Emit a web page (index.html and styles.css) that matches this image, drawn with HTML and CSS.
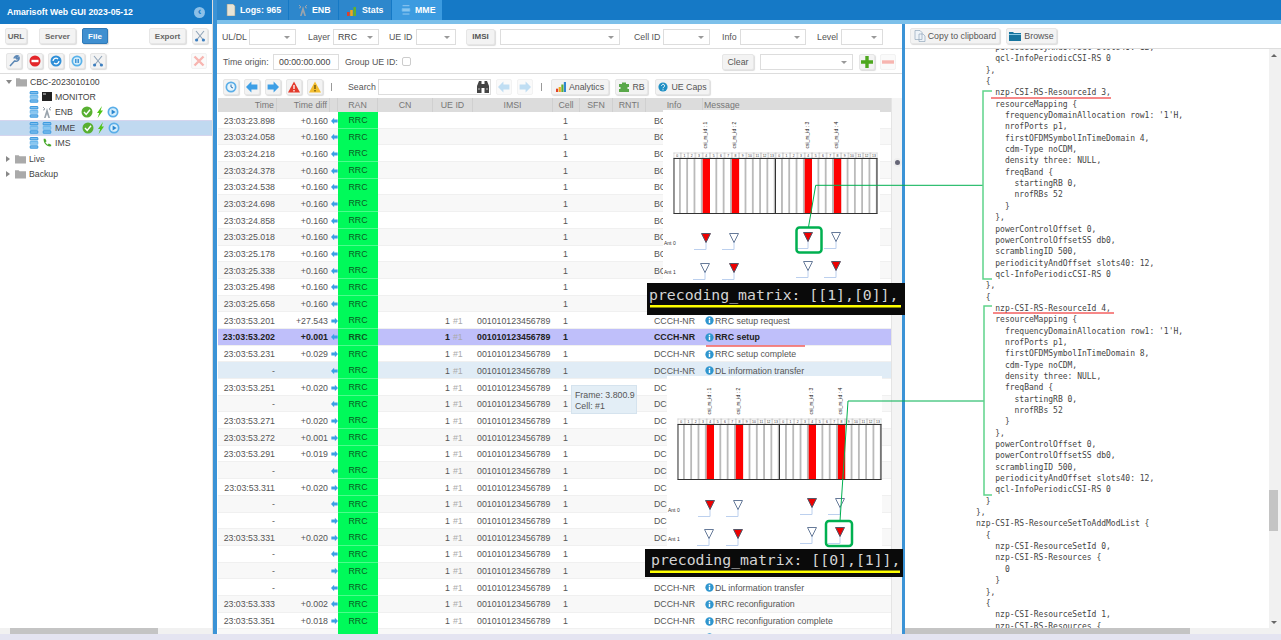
FILE: index.html
```html
<!doctype html>
<html>
    <head>
        <meta charset="utf-8">
        <title>Amarisoft Web GUI</title>
        <link rel="stylesheet" href="styles.css">
    </head>
    <body>
        <!-- Shared icons -->
        <svg class="defs">
            <defs>
            <symbol id="db" viewBox="0 0 10 14"><rect y="0" width="10" height="4.2" rx="1.5" fill="#3d9be0"/><rect y="4.8" width="10" height="4.2" rx="1" fill="#6db8ec"/><rect y="9.6" width="10" height="4.2" rx="1.5" fill="#3d9be0"/><path d="M1 2h8M1 7h8M1 11.7h8" stroke="#cfe9fb" stroke-width=".7"/></symbol>
            <symbol id="folder" viewBox="0 0 12 10"><path d="M0 1h4l1 1h7v8H0z" fill="#aaa"/></symbol>
            <symbol id="check" viewBox="0 0 12 12"><circle cx="6" cy="6" r="5.5" fill="#58b031"/><path d="M3 6l2.2 2.4L9 3.8" fill="none" stroke="#fff" stroke-width="1.5"/></symbol>
            <symbol id="bolt" viewBox="0 0 8 12"><path d="M6 0L1 7h2.2L1.6 12 7 4.6H4.6z" fill="#4fc415"/></symbol>
            <symbol id="play" viewBox="0 0 12 12"><circle cx="6" cy="6" r="5.5" fill="#5aaee8"/><circle cx="6" cy="6" r="3.8" fill="#d8effc"/><path d="M4.6 3.4L8.6 6l-4 2.6z" fill="#2a86cf"/></symbol>
            <symbol id="tower" viewBox="0 0 10 12"><path d="M5 2L2 12h1.6L5 8l1.4 4H8z" fill="#9aa4ad"/><path d="M1 1l2 2M9 1L7 3M1 4l2-.5M9 4l-2-.5" stroke="#9aa4ad"/></symbol>
            <symbol id="al" viewBox="0 0 8 8"><path d="M0 4l3.6-3.6v2h4v3.2h-4v2z" fill="#3d9fe6"/></symbol>
            <symbol id="ar" viewBox="0 0 8 8"><path d="M8 4L4.4.4v2h-4v3.2h4v2z" fill="#3d9fe6"/></symbol>
            <symbol id="info" viewBox="0 0 10 10"><circle cx="5" cy="5" r="4.6" fill="#2f96cf"/><rect x="4.2" y="4.2" width="1.6" height="3.6" fill="#fff"/><rect x="4.2" y="2" width="1.6" height="1.5" fill="#fff"/></symbol>
            <symbol id="scissors" viewBox="0 0 12 12"><path d="M3 9.500L10 1M9 9.500L2 1" stroke="#8fa3b8" stroke-width="1.1"/><circle cx="2.600" cy="10" r="1.600" fill="#3d7fc0"/><circle cx="9.400" cy="10" r="1.600" fill="#3d7fc0"/></symbol>
            <symbol id="bars" viewBox="0 0 12 12"><rect x="0" y="8" width="2.6" height="4" fill="#e0402a"/><rect x="3.2" y="6" width="2.6" height="6" fill="#f2a81d"/><rect x="6.4" y="3" width="2.6" height="9" fill="#62b02f"/><rect x="9.4" y="0" width="2.6" height="12" fill="#2f86d0"/></symbol>
            <symbol id="warn-red" viewBox="0 0 12 12"><path d="M6 .5L12 11.5H0z" fill="#e33a2c"/><path d="M6 4v4M6 9v1.4" stroke="#fff" stroke-width="1.3"/></symbol>
            <symbol id="warn-yel" viewBox="0 0 12 12"><path d="M6 .5L12 11.5H0z" fill="#f3bd2e"/><path d="M6 4v4M6 9v1.4" stroke="#5a4300" stroke-width="1.2"/></symbol>
            <symbol id="ant-on" viewBox="0 0 18 19"><path d="M0 16.5h12V8" fill="none" stroke="#bcd0ee"/><path d="M7.500 .5h9L12 9.500z" fill="#e00" stroke="#556"/></symbol>
            <symbol id="ant-off" viewBox="0 0 18 19"><path d="M0 16.5h12V8" fill="none" stroke="#bcd0ee"/><path d="M7.500 .5h9L12 9.500z" fill="#fff" stroke="#667a99"/></symbol>
            <g id="slot" class="ov-num">
                <rect width="102" height="6" fill="#fff"/>
                <text x="3.6" y="4.600">0</text><text x="10.9" y="4.600">1</text><text x="18.200" y="4.600">2</text><text x="25.500" y="4.600">3</text><text x="32.800" y="4.600">4</text><text x="40.100" y="4.600">5</text><text x="47.400" y="4.600">6</text><text x="54.700" y="4.600">7</text><text x="62" y="4.600">8</text><text x="69.300" y="4.600">9</text><text x="76.500" y="4.600">10</text><text x="83.800" y="4.600">11</text><text x="91.100" y="4.600">12</text><text x="98.400" y="4.600">13</text>
            </g>
            <pattern id="cells" width="7.29" height="60" patternUnits="userSpaceOnUse"><rect width="7.29" height="60" fill="#fff"/><rect x="5.500" width="1.800" height="60" fill="#b9b9b9"/></pattern>
            <pattern id="heads" width="7.29" height="6" patternUnits="userSpaceOnUse"><rect width="7.29" height="6" fill="none" stroke="#777" stroke-width=".5"/></pattern>
            <g id="resgrid">
                <use href="#slot"/><use href="#slot" x="102"/>
                <rect y="0" width="204" height="6" fill="url(#heads)"/>
                <rect y="6" width="204" height="55" fill="url(#cells)"/>
                <rect x="29.200" y="6" width="7.300" height="55" fill="#f00"/><rect x="58.300" y="6" width="7.300" height="55" fill="#f00"/><rect x="131.200" y="6" width="7.300" height="55" fill="#f00"/><rect x="160.400" y="6" width="7.300" height="55" fill="#f00"/>
                <path d="M0 6H204M0 61H204M.5 6V61M102 6V61M203.500 6V61" fill="none" stroke="#333"/>
                <g class="ov-id">
                    <text transform="translate(33.500 -4) rotate(-90)">csi_rs_id : 1</text>
                    <text transform="translate(62 -4) rotate(-90)">csi_rs_id : 2</text>
                    <text transform="translate(135 -4) rotate(-90)">csi_rs_id : 3</text>
                    <text transform="translate(164 -4) rotate(-90)">csi_rs_id : 4</text>
                </g>
            </g>
            </defs>
        </svg>

        <div class="app">
            <div class="side">
                <div class="side-title"><span>Amarisoft Web GUI 2023-05-12</span><i class="collapse">‹</i></div>
                <div class="side-bar">
                    <span class="btn btn-bold b-url">URL</span>
                    <span class="btn btn-bold b-server">Server</span>
                    <span class="btn btn-bold b-file">File</span>
                    <span class="btn btn-bold b-export">Export</span>
                    <span class="btn sq b-cut"><svg class="ic12"><use href="#scissors"/></svg></span>
                </div>
                <div class="side-bar side-tools">
                    <span class="btn sq"><svg class="ic12" viewBox="0 0 12 12"><path d="M2 11L7 5.500M6 3.500a3 3 0 0 1 4-2.500L8 3l1 1 2-1.500a3 3 0 0 1-4 3.500" fill="none" stroke="#5b87b5" stroke-width="1.500"/></svg></span>
                    <span class="btn sq"><svg class="ic12" viewBox="0 0 12 12"><circle cx="6" cy="6" r="5.500" fill="#e3262a"/><rect x="2.500" y="4.800" width="7" height="2.400" fill="#fff"/></svg></span>
                    <span class="btn sq"><svg class="ic12" viewBox="0 0 12 12"><circle cx="6" cy="6" r="5.500" fill="#2f8fd8"/><path d="M3 6a3 3 0 0 1 5-2M9 6a3 3 0 0 1-5 2" fill="none" stroke="#fff" stroke-width="1.300"/></svg></span>
                    <span class="btn sq"><svg class="ic12" viewBox="0 0 12 12"><circle cx="6" cy="6" r="5.500" fill="#59b2ea"/><circle cx="6" cy="6" r="3.800" fill="#d6eefb"/><path d="M4.800 4v4M7.200 4v4" stroke="#2a86cf" stroke-width="1.300"/></svg></span>
                    <span class="btn sq"><svg class="ic12"><use href="#scissors"/></svg></span>
                    <span class="btn sq flat b-close"><svg class="ic12" viewBox="0 0 12 12"><path d="M1.500 1.500l9 9M10.500 1.500l-9 9" stroke="#f7b5b0" stroke-width="2.400"/></svg></span>
                </div>
                <div class="tree">
                    <div class="node"><i class="tw tw-open"></i><svg class="ic-folder"><use href="#folder"/></svg>CBC-2023010100</div>
                    <div class="node lv"><svg class="ic-db"><use href="#db"/></svg><svg class="ic-db" viewBox="0 0 10 10"><rect width="10" height="9" fill="#222"/><path d="M1 2h3" stroke="#ddd"/></svg><span>MONITOR</span></div>
                    <div class="node lv"><svg class="ic-db"><use href="#db"/></svg><svg class="ic-db"><use href="#tower"/></svg><span class="nm-w">ENB</span><svg class="ic-st"><use href="#check"/></svg><svg class="ic-bolt"><use href="#bolt"/></svg><svg class="ic-st"><use href="#play"/></svg></div>
                    <div class="node lv sel-node"><svg class="ic-db"><use href="#db"/></svg><svg class="ic-db"><use href="#db"/></svg><span class="nm-w2">MME</span><svg class="ic-st"><use href="#check"/></svg><svg class="ic-bolt"><use href="#bolt"/></svg><svg class="ic-st"><use href="#play"/></svg></div>
                    <div class="node lv"><svg class="ic-db"><use href="#db"/></svg><svg class="ic-db" viewBox="0 0 12 12"><path d="M2 1l2 0 1.500 3-1.500 1c.8 1.500 1.800 2.500 3 3l1-1.500 3 1.500v2c-5 1-9.500-3.500-9-9z" fill="#49a92c"/></svg><span>IMS</span></div>
                    <div class="node"><i class="tw"></i><svg class="ic-folder"><use href="#folder"/></svg>Live</div>
                    <div class="node"><i class="tw"></i><svg class="ic-folder"><use href="#folder"/></svg>Backup</div>
                </div>
                <div class="hscroll"><i class="hthumb"></i></div>
            </div>
            <div class="vsplit"></div>
            <div class="main">
                <div class="tabs">
                    <span class="tab t-logs"><svg class="ic12" viewBox="0 0 10 12"><path d="M1 0h6l2 2v10H1z" fill="#e8e4d6" stroke="#998"  stroke-width=".6"/></svg>Logs: 965</span>
                    <span class="tab t-enb"><svg class="ic12"><use href="#tower"/></svg>ENB</span>
                    <span class="tab t-stats"><svg class="ic12"><use href="#bars"/></svg>Stats</span>
                    <span class="tab tab-on t-mme"><svg class="ic12"><use href="#db"/></svg>MME</span>
                </div>
                <div class="strip"></div>
                <div class="panes">
                    <div class="logpane">
                        <div class="filter">
                            <label class="f1">UL/DL<span class="sel w47"></span></label>
                            <label class="f2">Layer<span class="sel w46">RRC</span></label>
                            <label class="f3">UE ID<span class="sel w40"></span></label>
                            <span class="btn b-imsi">IMSI</span>
                            <span class="sel w120"></span>
                            <label class="f4">Cell ID<span class="sel w47"></span></label>
                            <label class="f5">Info<span class="sel w66"></span></label>
                            <label class="f6">Level<span class="sel w42"></span></label>
                        </div>
                        <div class="filter">
                            <label class="f7">Time origin:<span class="inp">00:00:00.000</span></label>
                            <label class="f8">Group UE ID:<i class="chk"></i></label>
                            <span class="btn b-clear">Clear</span>
                            <span class="sel w93"></span>
                            <span class="btn sq b-plus"><svg class="ic12" viewBox="0 0 12 12"><path d="M4.300 0h3.400v4.300H12v3.400H7.700V12H4.300V7.700H0V4.300h4.300z" fill="#4ea81f"/></svg></span>
                            <span class="btn sq flat b-minus"><svg class="ic12" viewBox="0 0 12 12"><rect y="4.300" width="12" height="3.400" fill="#f7b5b0"/></svg></span>
                        </div>
                        <div class="filter tools">
                            <span class="btn sq"><svg class="ic12" viewBox="0 0 12 12"><circle cx="6" cy="6" r="5.500" fill="#5aaee8"/><circle cx="6" cy="6" r="3.800" fill="#e8f5fc"/><path d="M6 3.500V6l2 1" fill="none" stroke="#2a6fb0"/></svg></span>
                            <span class="btn sq"><svg class="ic12"><use href="#al"/></svg></span>
                            <span class="btn sq"><svg class="ic12"><use href="#ar"/></svg></span>
                            <span class="btn sq"><svg class="ic12"><use href="#warn-red"/></svg></span>
                            <span class="btn sq"><svg class="ic12"><use href="#warn-yel"/></svg></span>
                            <i class="pipe p1"></i>
                            <label class="f9">Search<span class="inp search"><svg class="ic-bino" viewBox="0 0 14 14"><path d="M1 13V6l2-5h2.500v3h3V1H11l2 5v7H8.500V8h-3v5z" fill="#444"/><path d="M2 9h2M10 9h2" stroke="#bbb"/></svg></span></label>
                            <span class="btn sq flat"><svg class="ic12 faded"><use href="#al"/></svg></span>
                            <span class="btn sq flat"><svg class="ic12 faded"><use href="#ar"/></svg></span>
                            <i class="pipe p2"></i>
                            <span class="btn b-ana"><svg class="ic10"><use href="#bars"/></svg>Analytics</span>
                            <span class="btn b-rb"><svg class="ic12" viewBox="0 0 12 12"><path d="M1 3h3V1.500h4V3h3v3H9.500v2H11v3H1V8h1.500V6H1z" fill="#5aa84a"/></svg>RB</span>
                            <span class="btn b-caps"><svg class="ic10" viewBox="0 0 12 12"><circle cx="6" cy="6" r="5.500" fill="#1f8fc4"/><path d="M4.300 4.500a1.800 1.800 0 1 1 2.700 1.600c-.7.400-1 .8-1 1.400M6 8.700v1.300" fill="none" stroke="#fff" stroke-width="1.200"/></svg>UE Caps</span>
                        </div>
                        <div class="gridwrap">
                            <div class="grid">
                                <div class="hdr">
                                    <span class="h-r">Time</span><span class="h-r">Time diff</span><span></span><span>RAN</span><span>CN</span><span>UE ID</span><span>IMSI</span><span>Cell</span><span>SFN</span><span>RNTI</span><span>Info</span><span class="h-l">Message</span>
                                </div>
                                <div class="row"><span class="t">23:03:23.898</span><span class="d">+0.160</span><svg class="ar"><use href="#al"/></svg><span class="ran">RRC</span><span class="c">1</span><span class="i">BCCH-NR</span></div>
                                <div class="row"><span class="t">23:03:24.058</span><span class="d">+0.160</span><svg class="ar"><use href="#al"/></svg><span class="ran">RRC</span><span class="c">1</span><span class="i">BCCH-NR</span></div>
                                <div class="row"><span class="t">23:03:24.218</span><span class="d">+0.160</span><svg class="ar"><use href="#al"/></svg><span class="ran">RRC</span><span class="c">1</span><span class="i">BCCH-NR</span></div>
                                <div class="row"><span class="t">23:03:24.378</span><span class="d">+0.160</span><svg class="ar"><use href="#al"/></svg><span class="ran">RRC</span><span class="c">1</span><span class="i">BCCH-NR</span></div>
                                <div class="row"><span class="t">23:03:24.538</span><span class="d">+0.160</span><svg class="ar"><use href="#al"/></svg><span class="ran">RRC</span><span class="c">1</span><span class="i">BCCH-NR</span></div>
                                <div class="row"><span class="t">23:03:24.698</span><span class="d">+0.160</span><svg class="ar"><use href="#al"/></svg><span class="ran">RRC</span><span class="c">1</span><span class="i">BCCH-NR</span></div>
                                <div class="row"><span class="t">23:03:24.858</span><span class="d">+0.160</span><svg class="ar"><use href="#al"/></svg><span class="ran">RRC</span><span class="c">1</span><span class="i">BCCH-NR</span></div>
                                <div class="row"><span class="t">23:03:25.018</span><span class="d">+0.160</span><svg class="ar"><use href="#al"/></svg><span class="ran">RRC</span><span class="c">1</span><span class="i">BCCH-NR</span></div>
                                <div class="row"><span class="t">23:03:25.178</span><span class="d">+0.160</span><svg class="ar"><use href="#al"/></svg><span class="ran">RRC</span><span class="c">1</span><span class="i">BCCH-NR</span></div>
                                <div class="row"><span class="t">23:03:25.338</span><span class="d">+0.160</span><svg class="ar"><use href="#al"/></svg><span class="ran">RRC</span><span class="c">1</span><span class="i">BCCH-NR</span></div>
                                <div class="row"><span class="t">23:03:25.498</span><span class="d">+0.160</span><svg class="ar"><use href="#al"/></svg><span class="ran">RRC</span><span class="c">1</span><span class="i">BCCH-NR</span></div>
                                <div class="row"><span class="t">23:03:25.658</span><span class="d">+0.160</span><svg class="ar"><use href="#al"/></svg><span class="ran">RRC</span><span class="c">1</span><span class="i">BCCH-NR</span></div>
                                <div class="row"><span class="t">23:03:53.201</span><span class="d">+27.543</span><svg class="ar"><use href="#ar"/></svg><span class="ran">RRC</span><span class="ue">1<b>#1</b></span><span class="imsi">001010123456789</span><span class="c">1</span><span class="i">CCCH-NR</span><span class="m"><svg class="ii"><use href="#info"/></svg>RRC setup request</span></div>
                                <div class="row row-sel"><span class="t">23:03:53.202</span><span class="d">+0.001</span><svg class="ar"><use href="#al"/></svg><span class="ran">RRC</span><span class="ue">1<b>#1</b></span><span class="imsi">001010123456789</span><span class="c">1</span><span class="i">CCCH-NR</span><span class="m"><svg class="ii"><use href="#info"/></svg>RRC setup</span></div>
                                <div class="row"><span class="t">23:03:53.231</span><span class="d">+0.029</span><svg class="ar"><use href="#ar"/></svg><span class="ran">RRC</span><span class="ue">1<b>#1</b></span><span class="imsi">001010123456789</span><span class="c">1</span><span class="i">DCCH-NR</span><span class="m"><svg class="ii"><use href="#info"/></svg>RRC setup complete</span></div>
                                <div class="row row-hi"><span class="t">-</span><span class="d"></span><svg class="ar"><use href="#al"/></svg><span class="ran">RRC</span><span class="ue">1<b>#1</b></span><span class="imsi">001010123456789</span><span class="c">1</span><span class="i">DCCH-NR</span><span class="m"><svg class="ii"><use href="#info"/></svg>DL information transfer</span></div>
                                <div class="row"><span class="t">23:03:53.251</span><span class="d">+0.020</span><svg class="ar"><use href="#ar"/></svg><span class="ran">RRC</span><span class="ue">1<b>#1</b></span><span class="imsi">001010123456789</span><span class="c">1</span><span class="i">DCCH-NR</span></div>
                                <div class="row"><span class="t">-</span><span class="d"></span><svg class="ar"><use href="#al"/></svg><span class="ran">RRC</span><span class="ue">1<b>#1</b></span><span class="imsi">001010123456789</span><span class="c">1</span><span class="i">DCCH-NR</span></div>
                                <div class="row"><span class="t">23:03:53.271</span><span class="d">+0.020</span><svg class="ar"><use href="#ar"/></svg><span class="ran">RRC</span><span class="ue">1<b>#1</b></span><span class="imsi">001010123456789</span><span class="c">1</span><span class="i">DCCH-NR</span></div>
                                <div class="row"><span class="t">23:03:53.272</span><span class="d">+0.001</span><svg class="ar"><use href="#ar"/></svg><span class="ran">RRC</span><span class="ue">1<b>#1</b></span><span class="imsi">001010123456789</span><span class="c">1</span><span class="i">DCCH-NR</span></div>
                                <div class="row"><span class="t">23:03:53.291</span><span class="d">+0.019</span><svg class="ar"><use href="#ar"/></svg><span class="ran">RRC</span><span class="ue">1<b>#1</b></span><span class="imsi">001010123456789</span><span class="c">1</span><span class="i">DCCH-NR</span></div>
                                <div class="row"><span class="t">-</span><span class="d"></span><svg class="ar"><use href="#al"/></svg><span class="ran">RRC</span><span class="ue">1<b>#1</b></span><span class="imsi">001010123456789</span><span class="c">1</span><span class="i">DCCH-NR</span></div>
                                <div class="row"><span class="t">23:03:53.311</span><span class="d">+0.020</span><svg class="ar"><use href="#ar"/></svg><span class="ran">RRC</span><span class="ue">1<b>#1</b></span><span class="imsi">001010123456789</span><span class="c">1</span><span class="i">DCCH-NR</span></div>
                                <div class="row"><span class="t">-</span><span class="d"></span><svg class="ar"><use href="#al"/></svg><span class="ran">RRC</span><span class="ue">1<b>#1</b></span><span class="imsi">001010123456789</span><span class="c">1</span><span class="i">DCCH-NR</span></div>
                                <div class="row"><span class="t">-</span><span class="d"></span><svg class="ar"><use href="#ar"/></svg><span class="ran">RRC</span><span class="ue">1<b>#1</b></span><span class="imsi">001010123456789</span><span class="c">1</span><span class="i">DCCH-NR</span></div>
                                <div class="row"><span class="t">23:03:53.331</span><span class="d">+0.020</span><svg class="ar"><use href="#ar"/></svg><span class="ran">RRC</span><span class="ue">1<b>#1</b></span><span class="imsi">001010123456789</span><span class="c">1</span><span class="i">DCCH-NR</span></div>
                                <div class="row"><span class="t">-</span><span class="d"></span><svg class="ar"><use href="#al"/></svg><span class="ran">RRC</span><span class="ue">1<b>#1</b></span><span class="imsi">001010123456789</span><span class="c">1</span><span class="i">DCCH-NR</span></div>
                                <div class="row"><span class="t">-</span><span class="d"></span><svg class="ar"><use href="#ar"/></svg><span class="ran">RRC</span><span class="ue">1<b>#1</b></span><span class="imsi">001010123456789</span><span class="c">1</span><span class="i">DCCH-NR</span></div>
                                <div class="row"><span class="t">-</span><span class="d"></span><svg class="ar"><use href="#al"/></svg><span class="ran">RRC</span><span class="ue">1<b>#1</b></span><span class="imsi">001010123456789</span><span class="c">1</span><span class="i">DCCH-NR</span><span class="m"><svg class="ii"><use href="#info"/></svg>DL information transfer</span></div>
                                <div class="row"><span class="t">23:03:53.333</span><span class="d">+0.002</span><svg class="ar"><use href="#al"/></svg><span class="ran">RRC</span><span class="ue">1<b>#1</b></span><span class="imsi">001010123456789</span><span class="c">1</span><span class="i">DCCH-NR</span><span class="m"><svg class="ii"><use href="#info"/></svg>RRC reconfiguration</span></div>
                                <div class="row"><span class="t">23:03:53.351</span><span class="d">+0.018</span><svg class="ar"><use href="#ar"/></svg><span class="ran">RRC</span><span class="ue">1<b>#1</b></span><span class="imsi">001010123456789</span><span class="c">1</span><span class="i">DCCH-NR</span><span class="m"><svg class="ii"><use href="#info"/></svg>RRC reconfiguration complete</span></div>
                                <div class="row"><span class="t">23:04:03.384</span><span class="d">+0.033</span><svg class="ar"><use href="#ar"/></svg><span class="ran">RRC</span><span class="ue">1<b>#1</b></span><span class="imsi">001010123456789</span><span class="c">1</span><span class="i">DCCH-NR</span><span class="m"><svg class="ii"><use href="#info"/></svg>RRC release</span></div>
                            </div>
                            <div class="gridscroll"><i class="knob"></i></div>
                        </div>
                    </div>
                    <div class="vsplit vsplit-r"></div>
                    <div class="detail">
                        <div class="detail-bar">
                            <span class="btn b-copy"><svg class="ic12" viewBox="0 0 12 12"><path d="M1 .5h5l2 2v7H1zM5 4h4l2 2v5.500H5z" fill="#eef3f8" stroke="#93a7bb" stroke-width=".7"/></svg>Copy to clipboard</span>
                            <span class="btn b-browse"><svg class="ic12" viewBox="0 0 12 10"><path d="M0 1h4l1 1h7v8H0z" fill="#16759f"/><rect y="3" width="12" height="1" fill="#8ccbe6"/></svg>Browse</span>
                        </div>
                        <div class="detail-body">
<pre class="asn">    periodicityAndOffset slots40: 12,
    qcl-InfoPeriodicCSI-RS 0
  },
  {
    nzp-CSI-RS-ResourceId 3,
    resourceMapping {
      frequencyDomainAllocation row1: '1'H,
      nrofPorts p1,
      firstOFDMSymbolInTimeDomain 4,
      cdm-Type noCDM,
      density three: NULL,
      freqBand {
        startingRB 0,
        nrofRBs 52
      }
    },
    powerControlOffset 0,
    powerControlOffsetSS db0,
    scramblingID 500,
    periodicityAndOffset slots40: 12,
    qcl-InfoPeriodicCSI-RS 0
  },
  {
    nzp-CSI-RS-ResourceId 4,
    resourceMapping {
      frequencyDomainAllocation row1: '1'H,
      nrofPorts p1,
      firstOFDMSymbolInTimeDomain 8,
      cdm-Type noCDM,
      density three: NULL,
      freqBand {
        startingRB 0,
        nrofRBs 52
      }
    },
    powerControlOffset 0,
    powerControlOffsetSS db0,
    scramblingID 500,
    periodicityAndOffset slots40: 12,
    qcl-InfoPeriodicCSI-RS 0
  }
},
nzp-CSI-RS-ResourceSetToAddModList {
  {
    nzp-CSI-ResourceSetId 0,
    nzp-CSI-RS-Resources {
      0
    }
  },
  {
    nzp-CSI-ResourceSetId 1,
    nzp-CSI-RS-Resources {
      1
    }
  }
}</pre>
                            <div class="vscroll"><i class="up"></i><i class="vthumb"></i><i class="down"></i></div>
                            <div class="hscroll hscroll-r"><i class="hthumb"></i></div>
                        </div>
                    </div>
                </div>
            </div>
        </div>
        <div class="foot"></div>

        <div class="tip">Frame: 3.800.9<br>Cell: #1</div>

        <!-- Annotations pasted over the log -->
        <svg class="notes" width="1281" height="640">
            <rect x="663" y="110" width="217" height="173" fill="#fff"/>
            <rect x="667" y="376" width="215" height="173" fill="#fff"/>

            <use href="#resgrid" x="673.500" y="152.500"/>
            <use href="#resgrid" x="677.500" y="418.500"/>

            <text class="ov-ant" x="664" y="245">Ant 0</text>
            <text class="ov-ant" x="664" y="274">Ant 1</text>
            <use href="#ant-on" x="694" y="233" width="18" height="19"/><use href="#ant-off" x="722" y="233" width="18" height="19"/><use href="#ant-on" x="796" y="232" width="18" height="19"/><use href="#ant-off" x="824" y="232" width="18" height="19"/>
            <use href="#ant-off" x="693" y="263" width="18" height="19"/><use href="#ant-on" x="722" y="263" width="18" height="19"/><use href="#ant-off" x="796" y="261" width="18" height="19"/><use href="#ant-on" x="824" y="261" width="18" height="19"/>

            <text class="ov-ant" x="668" y="512">Ant 0</text>
            <text class="ov-ant" x="668" y="541">Ant 1</text>
            <use href="#ant-on" x="698" y="500" width="18" height="19"/><use href="#ant-off" x="726" y="500" width="18" height="19"/><use href="#ant-on" x="800" y="498" width="18" height="19"/><use href="#ant-off" x="828" y="498" width="18" height="19"/>
            <use href="#ant-off" x="697" y="529" width="18" height="19"/><use href="#ant-on" x="726" y="529" width="18" height="19"/><use href="#ant-off" x="800" y="527" width="18" height="19"/><use href="#ant-on" x="828" y="527" width="18" height="19"/>

            <rect x="796.500" y="227.500" width="25" height="25" rx="3" class="ov-box"/>
            <rect x="826" y="521" width="26" height="25" rx="3" class="ov-box"/>
            <path d="M808.500 227L815.700 185.300H983" class="ov-line"/>
            <path d="M840 521L848 401H984" class="ov-line"/>
            <path d="M992 91H983V279H992" class="ov-brace"/>
            <path d="M992 306H984V495H992" class="ov-brace"/>

            <path d="M991 98H1111M993 313H1114M706 346H805" stroke="#e11" fill="none"/>

            <rect x="647" y="283" width="258" height="32" fill="#0a0a0a"/>
            <text class="ov-code" x="649" y="300">precoding_matrix: [[1],[0]],</text>
            <rect x="650" y="305" width="251" height="2.500" fill="#ff0"/>
            <rect x="645" y="549" width="258" height="28" fill="#0a0a0a"/>
            <text class="ov-code" x="651" y="565">precoding_matrix: [[0],[1]],</text>
            <rect x="650" y="570.500" width="250" height="2.500" fill="#ff0"/>
        </svg>
    </body>
</html>
```

FILE: styles.css
```css
* {
    margin: 0;
    padding: 0;
    box-sizing: border-box;
}
body {
    width: 1281px;
    height: 640px;
    overflow: hidden;
    position: relative;
    background-color: #fff;
    font-family: "Liberation Sans", Arial, sans-serif;
    font-size: 8.8px;
    color: #555;
}
.defs {
    position: absolute;
    width: 0;
    height: 0;
}
.app {
    display: flex;
    height: 634px;
}
.foot {
    height: 6px;
    background-color: #e4e4f1;
}
.vsplit {
    width: 4px;
    background-color: #3b93d6;
}
.vsplit-r {
    width: 3px;
}

/* Buttons and fields */
.btn {
    display: inline-flex;
    align-items: center;
    justify-content: center;
    height: 16px;
    background-color: #f3f3f3;
    border: 1px solid #e6e6e6;
    border-radius: 2px;
    box-shadow: 1px 1px 1px #ddd;
    color: #555;
    white-space: nowrap;
}
.btn-bold {
    font-size: 8px;
    font-weight: bold;
    color: #666;
}
.sq {
    width: 16px;
}
.flat {
    background-color: #fafafa;
    box-shadow: none;
    border-color: #f2f2f2;
}
.ic12 {
    width: 12px;
    height: 12px;
    flex: none;
}
.ic10 {
    width: 10px;
    height: 10px;
    flex: none;
    margin-right: 3px;
}
.faded {
    opacity: .3;
}
.sel {
    display: inline-block;
    position: relative;
    height: 16px;
    line-height: 14px;
    padding-left: 4px;
    background-color: #fff;
    border: 1px solid #ddd;
    color: #444;
}
.sel::after {
    content: "";
    position: absolute;
    right: 5px;
    top: 6px;
    border-top: 3px solid #999;
    border-left: 3px solid transparent;
    border-right: 3px solid transparent;
}
.inp {
    display: inline-block;
    height: 16px;
    line-height: 14px;
    padding-left: 5px;
    background-color: #fff;
    border: 1px solid #ddd;
    color: #444;
}
.w40 { width: 40px; }
.w42 { width: 42px; }
.w46 { width: 46px; }
.w47 { width: 47px; }
.w66 { width: 66px; }
.w93 { width: 93px; }
.w120 { width: 120px; }

/* Left tree */
.side {
    width: 213px;
    display: flex;
    flex-direction: column;
    border-right: 1px solid #ddd;
}
.side-title {
    height: 24px;
    display: flex;
    align-items: center;
    justify-content: space-between;
    padding: 0 7px;
    background-color: #1579c6;
    color: #fff;
    font-size: 8.7px;
    font-weight: bold;
}
.collapse {
    width: 11px;
    height: 11px;
    border-radius: 50%;
    background-color: #8cc0e8;
    color: #1579c6;
    font: bold 11px/9px "Liberation Sans", sans-serif;
    text-align: center;
}
.side-bar {
    height: 25px;
    display: flex;
    align-items: center;
    padding-left: 5px;
    border-bottom: 1px solid #ddd;
}
.side-tools {
    padding-left: 6px;
    gap: 5px;
}
.b-url { width: 22px; }
.b-server { width: 37px; margin-left: 12px; }
.b-file {
    width: 26px;
    margin-left: 6px;
    background-color: #3f8fd0;
    border-color: #2f7ab8;
    color: #fff;
}
.b-export { width: 37px; margin-left: 41px; }
.b-cut { margin-left: 6px; }
.b-close { margin-left: 80px; }
.tree {
    flex: 1;
    color: #444;
    font-size: 8.7px;
}
.node {
    height: 15.4px;
    display: flex;
    align-items: center;
    padding-left: 6px;
}
.lv {
    padding-left: 29px;
}
.sel-node {
    background-color: #c0d9f0;
    border-top: 1px solid #d5d5ee;
    border-bottom: 1px solid #d5d5ee;
}
.tw {
    width: 0;
    height: 0;
    margin-right: 5px;
    border-left: 4px solid #888;
    border-top: 3px solid transparent;
    border-bottom: 3px solid transparent;
}
.tw-open {
    margin-right: 4px;
    border-top: 4px solid #888;
    border-left: 3px solid transparent;
    border-right: 3px solid transparent;
    border-bottom: 0;
}
.ic-folder {
    width: 11px;
    height: 10px;
    margin-right: 3px;
}
.ic-db {
    width: 10px;
    height: 12px;
    margin-right: 3px;
}
.ic-st {
    width: 12px;
    height: 12px;
}
.ic-bolt {
    width: 8px;
    height: 12px;
    margin: 0 3px;
}
.nm-w { margin-right: 8px; }
.nm-w2 { margin-right: 7px; }
.hscroll {
    height: 6px;
    background-color: #f1f1f1;
    padding-left: 10px;
}
.hthumb {
    display: block;
    width: 148px;
    height: 6px;
    background-color: #c4c4c4;
}

/* Tabs */
.main {
    flex: 1;
    display: flex;
    flex-direction: column;
    min-width: 0;
}
.tabs {
    height: 20px;
    display: flex;
    background-color: #1579c6;
    color: #fff;
    font-weight: bold;
}
.tab {
    height: 20px;
    display: flex;
    align-items: center;
    gap: 3px;
    padding-left: 8px;
    margin-right: 1px;
    background-color: #2d87cc;
}
.tab-on {
    background-color: #3c9be0;
}
.t-logs { width: 71px; }
.t-enb { width: 49px; }
.t-stats { width: 52px; }
.t-mme { width: 50px; }
.strip {
    height: 4px;
    background-color: #7cc0ea;
}
.panes {
    flex: 1;
    display: flex;
    min-height: 0;
}

/* Log pane */
.logpane {
    width: 685px;
    display: flex;
    flex-direction: column;
}
.filter {
    height: 25px;
    flex: none;
    display: flex;
    align-items: center;
    padding-left: 5px;
    padding-top: 1px;
    border-bottom: 1px solid #ddd;
}
.filter label {
    display: flex;
    align-items: center;
    justify-content: space-between;
}
.f1 { width: 74px; }
.f2 { width: 71px; margin-left: 12px; }
.f3 { width: 67px; margin-left: 10px; }
.b-imsi { width: 29px; margin-left: 10px; font-weight: bold; font-size: 8px; }
.b-imsi + .sel { margin-left: 5px; }
.f4 { width: 76px; margin-left: 14px; }
.f5 { width: 84px; margin-left: 12px; }
.f6 { width: 66px; margin-left: 11px; }
.f7 { width: 116px; margin-left: 1px; }
.f7 .inp { width: 66px; }
.f8 { width: 66px; margin-left: 6px; }
.chk {
    width: 9px;
    height: 9px;
    border: 1px solid #ccc;
    border-radius: 2px;
    background-color: #fff;
}
.b-clear { width: 32px; margin-left: 311px; }
.b-clear + .sel { margin-left: 6px; }
.b-plus { margin-left: 6px; }
.b-minus { margin-left: 5px; }
.tools {
    height: 24px;
    padding-left: 6px;
    gap: 5px;
    border-bottom: 0;
}
.pipe {
    width: 1px;
    height: 8px;
    background-color: #999;
}
.p1 { margin-left: 3px; }
.f9 { width: 143px; margin-left: 11px; }
.search {
    width: 113px;
    position: relative;
}
.ic-bino {
    position: absolute;
    right: 0;
    top: 0;
    width: 14px;
    height: 14px;
}
.p2 { margin-left: 3px; }
.b-ana { width: 58px; margin-left: 4px; }
.b-rb { width: 33px; gap: 2px; margin-left: 1px; }
.b-caps { width: 55px; margin-left: 2px; }
.gridwrap {
    flex: 1;
    display: flex;
    min-height: 0;
}
.grid {
    width: 674px;
    padding-left: 1px;
    overflow: hidden;
}
.gridscroll {
    width: 11px;
    position: relative;
    background-color: #f4f4f4;
    border-left: 1px solid #e4e4e4;
}
.knob {
    position: absolute;
    left: 1px;
    top: 60px;
    width: 9px;
    height: 9px;
    border-radius: 50%;
    border: 2px solid #eee;
    background-color: #667;
}
.hdr, .row {
    display: grid;
    grid-template-columns: 59px 53px 8px 40px 55px 40px 80px 27px 33px 33px 57px 188px;
    align-items: center;
}
.hdr {
    height: 14px;
    background-color: #dcdcdc;
    color: #777;
    text-align: center;
}
.hdr span {
    height: 14px;
    line-height: 14px;
    border-right: 1px solid #d0d0d0;
}
.hdr .h-r { text-align: right; padding-right: 2px; }
.hdr .h-l { text-align: left; padding-left: 1px; border-right: 0; }
.row {
    height: 16.7px;
    border-bottom: 1px solid #f0f0f0;
    color: #555;
}
.row:nth-child(odd) {
    background-color: #f8f8f8;
}
.row-sel, .row-sel:nth-child(odd) {
    background-color: #bfbffa;
    color: #222;
    font-weight: bold;
}
.row-hi, .row-hi:nth-child(odd) {
    background-color: #e0ecf6;
}
.t, .d {
    text-align: right;
    padding-right: 2px;
}
.ar {
    width: 7px;
    height: 8px;
    margin-left: 1px;
}
.ran {
    height: 100%;
    line-height: 16px;
    text-align: center;
    background-color: #00fa5a;
    border-bottom: 1px solid #4cfc8c;
    color: #0b5a24;
}
.ue {
    grid-column: 6;
    padding-left: 12px;
}
.ue b {
    margin-left: 3px;
    font-weight: normal;
    color: #aaa;
}
.imsi {
    grid-column: 7;
    padding-left: 4px;
}
.c {
    grid-column: 8;
    padding-left: 10px;
}
.i {
    grid-column: 11;
    padding-left: 8px;
}
.m {
    grid-column: 12;
    display: flex;
    align-items: center;
    padding-left: 2px;
}
.ii {
    width: 9px;
    height: 9px;
    margin-right: 1px;
}

/* Detail pane */
.detail {
    flex: 1;
    display: flex;
    flex-direction: column;
    min-width: 0;
}
.detail-bar {
    height: 25px;
    flex: none;
    display: flex;
    align-items: center;
    padding-left: 5px;
    gap: 6px;
    border-bottom: 1px solid #ddd;
}
.b-copy { width: 90px; gap: 2px; }
.b-browse { width: 51px; gap: 3px; }
.detail-body {
    flex: 1;
    display: grid;
    grid-template-columns: 364px 12px;
    grid-template-rows: 579px 6px;
    min-height: 0;
    overflow: hidden;
}
.asn {
    grid-column: 1;
    grid-row: 1;
    height: 586px;
    overflow: hidden;
    padding: 0 0 0 71px;
    margin-top: -7px;
    font-family: "DejaVu Sans Mono", monospace;
    font-size: 8px;
    line-height: 11.35px;
    color: #444;
}
.vscroll {
    grid-column: 2;
    grid-row: 1 / 3;
    position: relative;
    background-color: #f1f1f1;
}
.vthumb {
    position: absolute;
    left: 0;
    top: 441px;
    width: 9px;
    height: 41px;
    background-color: #c4c4c4;
}
.up, .down {
    position: absolute;
    left: 2px;
    border-left: 3px solid transparent;
    border-right: 3px solid transparent;
}
.up { top: 5px; border-bottom: 3px solid #666; }
.down { top: 572px; border-top: 3px solid #666; }
.hscroll-r {
    grid-column: 1;
    grid-row: 2;
    padding-left: 0;
    position: relative;
}
.hscroll-r .hthumb {
    width: 285px;
}

/* Tooltip */
.tip {
    position: absolute;
    left: 571px;
    top: 385px;
    width: 66px;
    height: 29px;
    padding: 4px 0 0 3px;
    line-height: 11px;
    background-color: #e3eef6;
    border: 1px solid #d5e3ee;
    color: #555;
}

/* Annotations */
.notes {
    position: absolute;
    left: 0;
    top: 0;
    pointer-events: none;
}
.ov-num text {
    font-size: 3.4px;
    text-anchor: middle;
    fill: #333;
}
.ov-id text {
    font-size: 5px;
    text-anchor: start;
    fill: #222;
}
.ov-ant {
    font-size: 5px;
    fill: #333;
}
.ov-box {
    fill: none;
    stroke: #00b050;
    stroke-width: 2.5;
}
.ov-line {
    fill: none;
    stroke: #00b050;
}
.ov-brace {
    fill: none;
    stroke: #5fd48a;
    stroke-width: 1.5;
}
.ov-code {
    font-family: "DejaVu Sans Mono", monospace;
    font-size: 14.8px;
    fill: #d4d4d4;
}
```
